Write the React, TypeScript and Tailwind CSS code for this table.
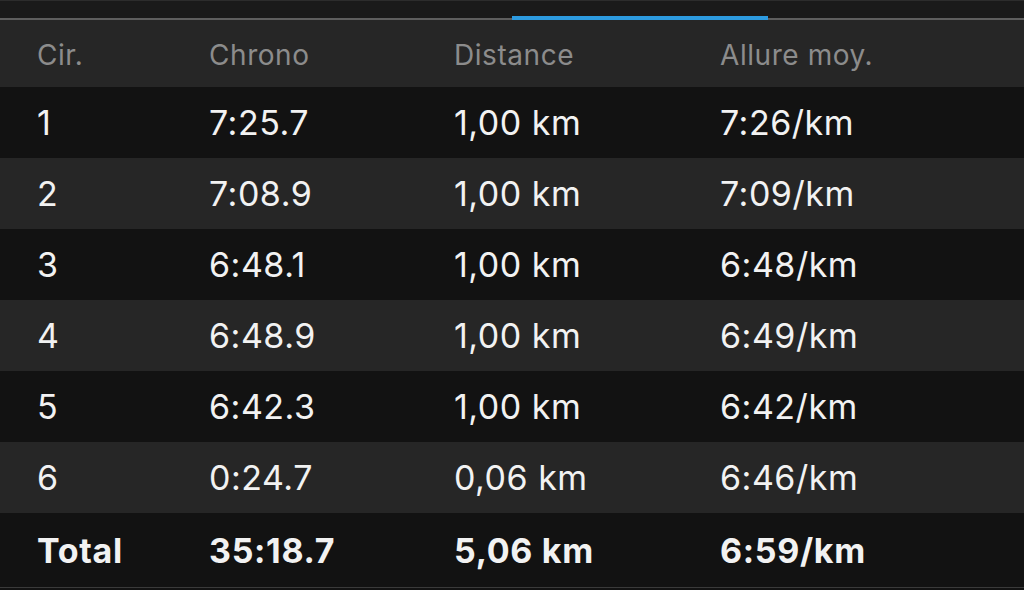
import React from "react"

const laps = [
    { lap: "1", time: "7:25.7", dist: "1,00 km", pace: "7:26/km" },
    { lap: "2", time: "7:08.9", dist: "1,00 km", pace: "7:09/km" },
    { lap: "3", time: "6:48.1", dist: "1,00 km", pace: "6:48/km" },
    { lap: "4", time: "6:48.9", dist: "1,00 km", pace: "6:49/km" },
    { lap: "5", time: "6:42.3", dist: "1,00 km", pace: "6:42/km" },
    { lap: "6", time: "0:24.7", dist: "0,06 km", pace: "6:46/km" },
]

const cols = "grid grid-cols-[172px_245px_266px_1fr] items-center pl-[37px]"

export default function App() {
    return (
        <div className="w-[1024px] h-[590px] overflow-hidden bg-[#121212] font-['Inter','Liberation_Sans',sans-serif] text-[#f2f2f2]">
            {/* Tab strip */}
            <div className="flex h-[20px] items-end bg-[#1a1a1a] border-t border-[#2c2c2c]">
                <div className="w-1/4 h-[2px] bg-[#5e5e5e]" />
                <div className="w-1/4 h-[2px] bg-[#5e5e5e]" />
                <div className="w-1/4 h-[4px] bg-[#2d9be0]" />
                <div className="w-1/4 h-[2px] bg-[#5e5e5e]" />
            </div>

            {/* Header */}
            <div className={`${cols} h-[67px] pt-[3px] bg-[#262626] text-[28px] tracking-[0.02em] text-[#8c8c8c]`}>
                <div>Cir.</div>
                <div>Chrono</div>
                <div>Distance</div>
                <div>Allure moy.</div>
            </div>

            {/* Rows */}
            {laps.map((r, i) => (
                <div
                    key={r.lap}
                    className={`${cols} h-[71px] text-[34px] tracking-[0.015em] ${i % 2 === 0 ? "bg-[#121212]" : "bg-[#262626]"}`}
                >
                    <div>{r.lap}</div>
                    <div>{r.time}</div>
                    <div>{r.dist}</div>
                    <div>{r.pace}</div>
                </div>
            ))}

            {/* Total */}
            <div className={`${cols} h-[75px] bg-[#121212] text-[34px] tracking-[0.02em] font-bold border-b border-[#3a3a3a]`}>
                <div>Total</div>
                <div>35:18.7</div>
                <div>5,06 km</div>
                <div>6:59/km</div>
            </div>
        </div>
    )
}
